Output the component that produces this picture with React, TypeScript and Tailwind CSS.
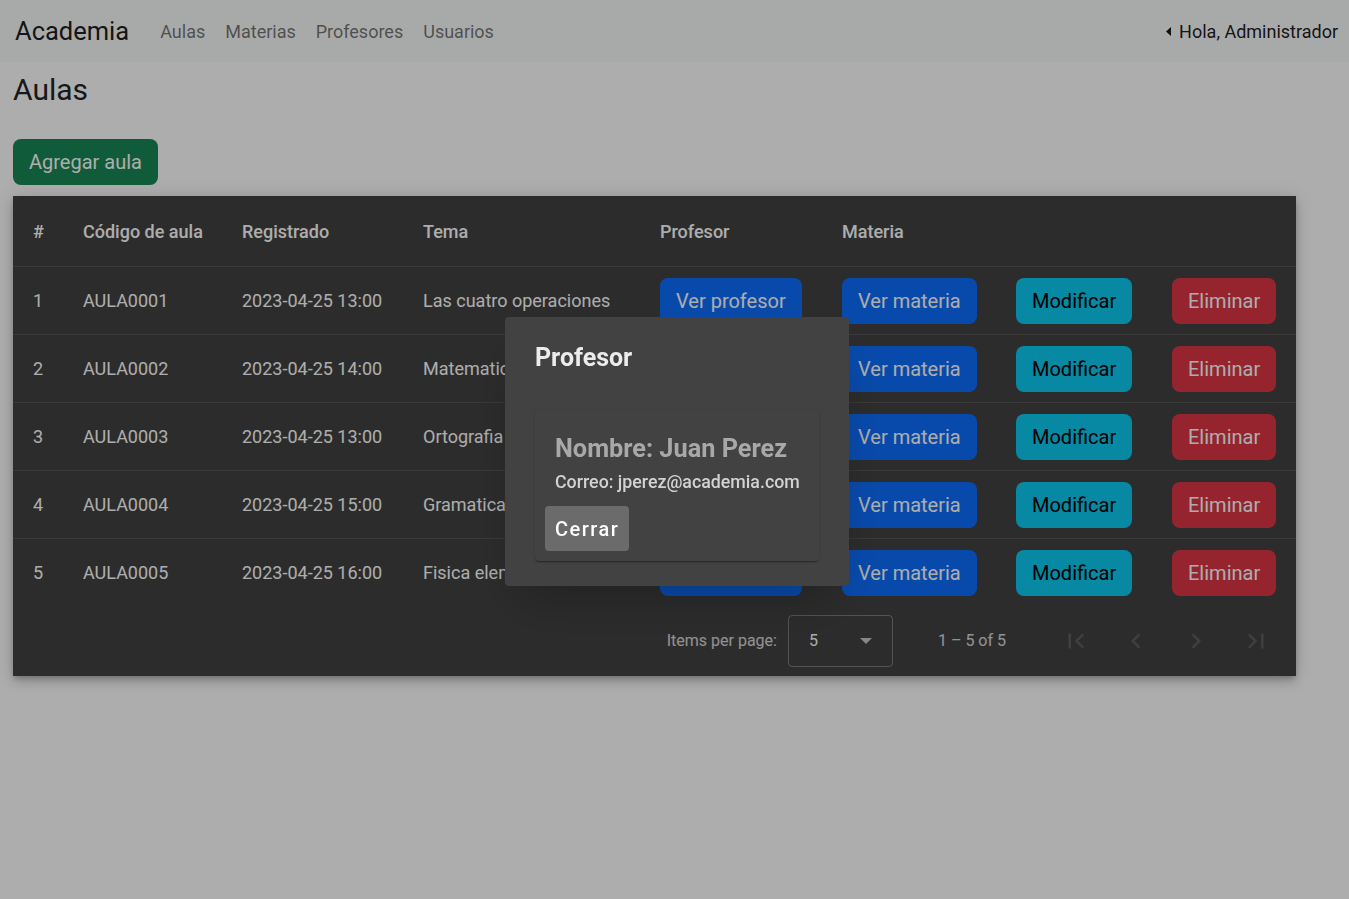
import React from "react";

interface Aula {
  id: number;
  codigo: string;
  registrado: string;
  tema: string;
}

const aulas: Aula[] = [
  { id: 1, codigo: "AULA0001", registrado: "2023-04-25 13:00", tema: "Las cuatro operaciones" },
  { id: 2, codigo: "AULA0002", registrado: "2023-04-25 14:00", tema: "Matematicas basicas" },
  { id: 3, codigo: "AULA0003", registrado: "2023-04-25 13:00", tema: "Ortografia" },
  { id: 4, codigo: "AULA0004", registrado: "2023-04-25 15:00", tema: "Gramatica" },
  { id: 5, codigo: "AULA0005", registrado: "2023-04-25 16:00", tema: "Fisica elemental" },
];

const cols = "grid grid-cols-[50px_159px_181px_237px_182px_174px_156px_144px]";

const btn = "rounded-lg px-4 py-2 text-[20px] leading-[30px] whitespace-nowrap";

function PageIcon({ d }: { d: string }) {
  return (
    <button className="flex h-12 w-12 items-center justify-center" disabled>
      <svg width="30" height="30" viewBox="0 0 24 24" className="fill-white/15">
        <path d={d} />
      </svg>
    </button>
  );
}

export default function App() {
  return (
    <div className="min-h-screen bg-white font-['Roboto',sans-serif]">
      {/* navbar */}
      <nav className="flex h-[62px] items-center bg-[#f8f9fa] pl-[15px] pr-[11px]">
        <span className="text-[25.5px] text-black/90">Academia</span>
        <div className="ml-[31px] flex gap-[20px] text-[18px] text-black/55">
          <a>Aulas</a>
          <a>Materias</a>
          <a>Profesores</a>
          <a>Usuarios</a>
        </div>
        <div className="ml-auto flex items-center gap-[7px] text-[18px] text-black/90">
          <svg width="6" height="9" viewBox="0 0 6 9">
            <path d="M5 0 L0 4.5 L5 9 Z" fill="currentColor" />
          </svg>
          Hola, Administrador
        </div>
      </nav>

      <main className="px-[13px]">
        <h3 className="mt-[10px] text-[30px] leading-[36px] text-[#212529]">Aulas</h3>

        <button className={`${btn} mt-[31px] bg-[#198754] text-white`}>Agregar aula</button>

        <div className="mt-[11px] w-[1283px] bg-[#424242] text-white shadow-[0_3px_5px_-1px_rgba(0,0,0,0.2),0_6px_10px_0_rgba(0,0,0,0.14),0_1px_18px_0_rgba(0,0,0,0.12)]">
          <div className={`${cols} h-[70px] items-center text-[18px] font-medium`}>
            {["#", "Código de aula", "Registrado", "Tema", "Profesor", "Materia", "", ""].map((h, i) => (
              <div key={i} className="pl-5">{h}</div>
            ))}
          </div>

          {aulas.map((a) => (
            <div key={a.id} className={`${cols} h-[68px] items-center border-t border-white/10 text-[18px]`}>
              <div className="pl-5">{a.id}</div>
              <div className="pl-5">{a.codigo}</div>
              <div className="pl-5">{a.registrado}</div>
              <div className="pl-5 whitespace-nowrap">{a.tema}</div>
              <div className="pl-5">
                <button className={`${btn} bg-[#0d6efd] text-white`}>Ver profesor</button>
              </div>
              <div className="pl-5">
                <button className={`${btn} bg-[#0d6efd] text-white`}>Ver materia</button>
              </div>
              <div className="pl-5">
                <button className={`${btn} bg-[#0dcaf0] text-black`}>Modificar</button>
              </div>
              <div className="pl-5">
                <button className={`${btn} bg-[#dc3545] text-white`}>Eliminar</button>
              </div>
            </div>
          ))}

          {/* paginator */}
          <div className="flex h-[70px] items-center justify-end pr-4 text-white/80">
            <span className="text-[16px]">Items per page:</span>
            <div className="ml-[11px] flex h-[52px] w-[105px] items-center justify-between rounded border border-white/30 pl-5 pr-[20px] text-[16px] text-white">
              <span>5</span>
              <svg width="12" height="6" viewBox="0 0 12 6">
                <path d="M0 0 L12 0 L6 6 Z" fill="rgba(255,255,255,0.7)" />
              </svg>
            </div>
            <span className="ml-[45px] mr-[46px] text-[16px]">1 – 5 of 5</span>
            <div className="flex gap-3">
              <PageIcon d="M18.41 16.59L13.82 12l4.59-4.59L17 6l-6 6 6 6zM6 6h2v12H6z" />
              <PageIcon d="M15.41 7.41L14 6l-6 6 6 6 1.41-1.41L10.83 12z" />
              <PageIcon d="M10 6L8.59 7.41 13.17 12l-4.58 4.59L10 18l6-6z" />
              <PageIcon d="M5.59 7.41L10.18 12l-4.59 4.59L7 18l6-6-6-6zM16 6h2v12h-2z" />
            </div>
          </div>
        </div>
      </main>

      {/* dialog */}
      <div className="fixed inset-0 flex items-center justify-center bg-black/[0.32]">
        <div className="ml-[5px] mt-[4px] w-[344px] rounded bg-[#424242] px-[30px] pb-[25px] pt-[25px] shadow-2xl">
          <h2 className="text-[25px] font-bold leading-[32px] text-white/90">Profesor</h2>
          <div className="mt-[35px] rounded bg-[#424242] px-[10px] pb-[10px] pt-[24px] shadow-[0_2px_1px_-1px_rgba(0,0,0,0.2),0_1px_1px_0_rgba(0,0,0,0.14),0_1px_3px_0_rgba(0,0,0,0.12)]">
            <h4 className="px-[10px] text-[25.3px] font-bold leading-[32px] text-[#a8a8a8]">Nombre: Juan Perez</h4>
            <p className="mt-[2px] whitespace-nowrap pl-[10px] text-[17.8px] font-medium leading-[30px] text-[#d2d2d2]">
              Correo: jperez@academia.com
            </p>
            <button className="mt-[9px] h-[45px] rounded bg-[#6b6b6b] px-[10px] text-[20px] font-medium tracking-[1.5px] text-white">
              Cerrar
            </button>
          </div>
        </div>
      </div>
    </div>
  );
}
